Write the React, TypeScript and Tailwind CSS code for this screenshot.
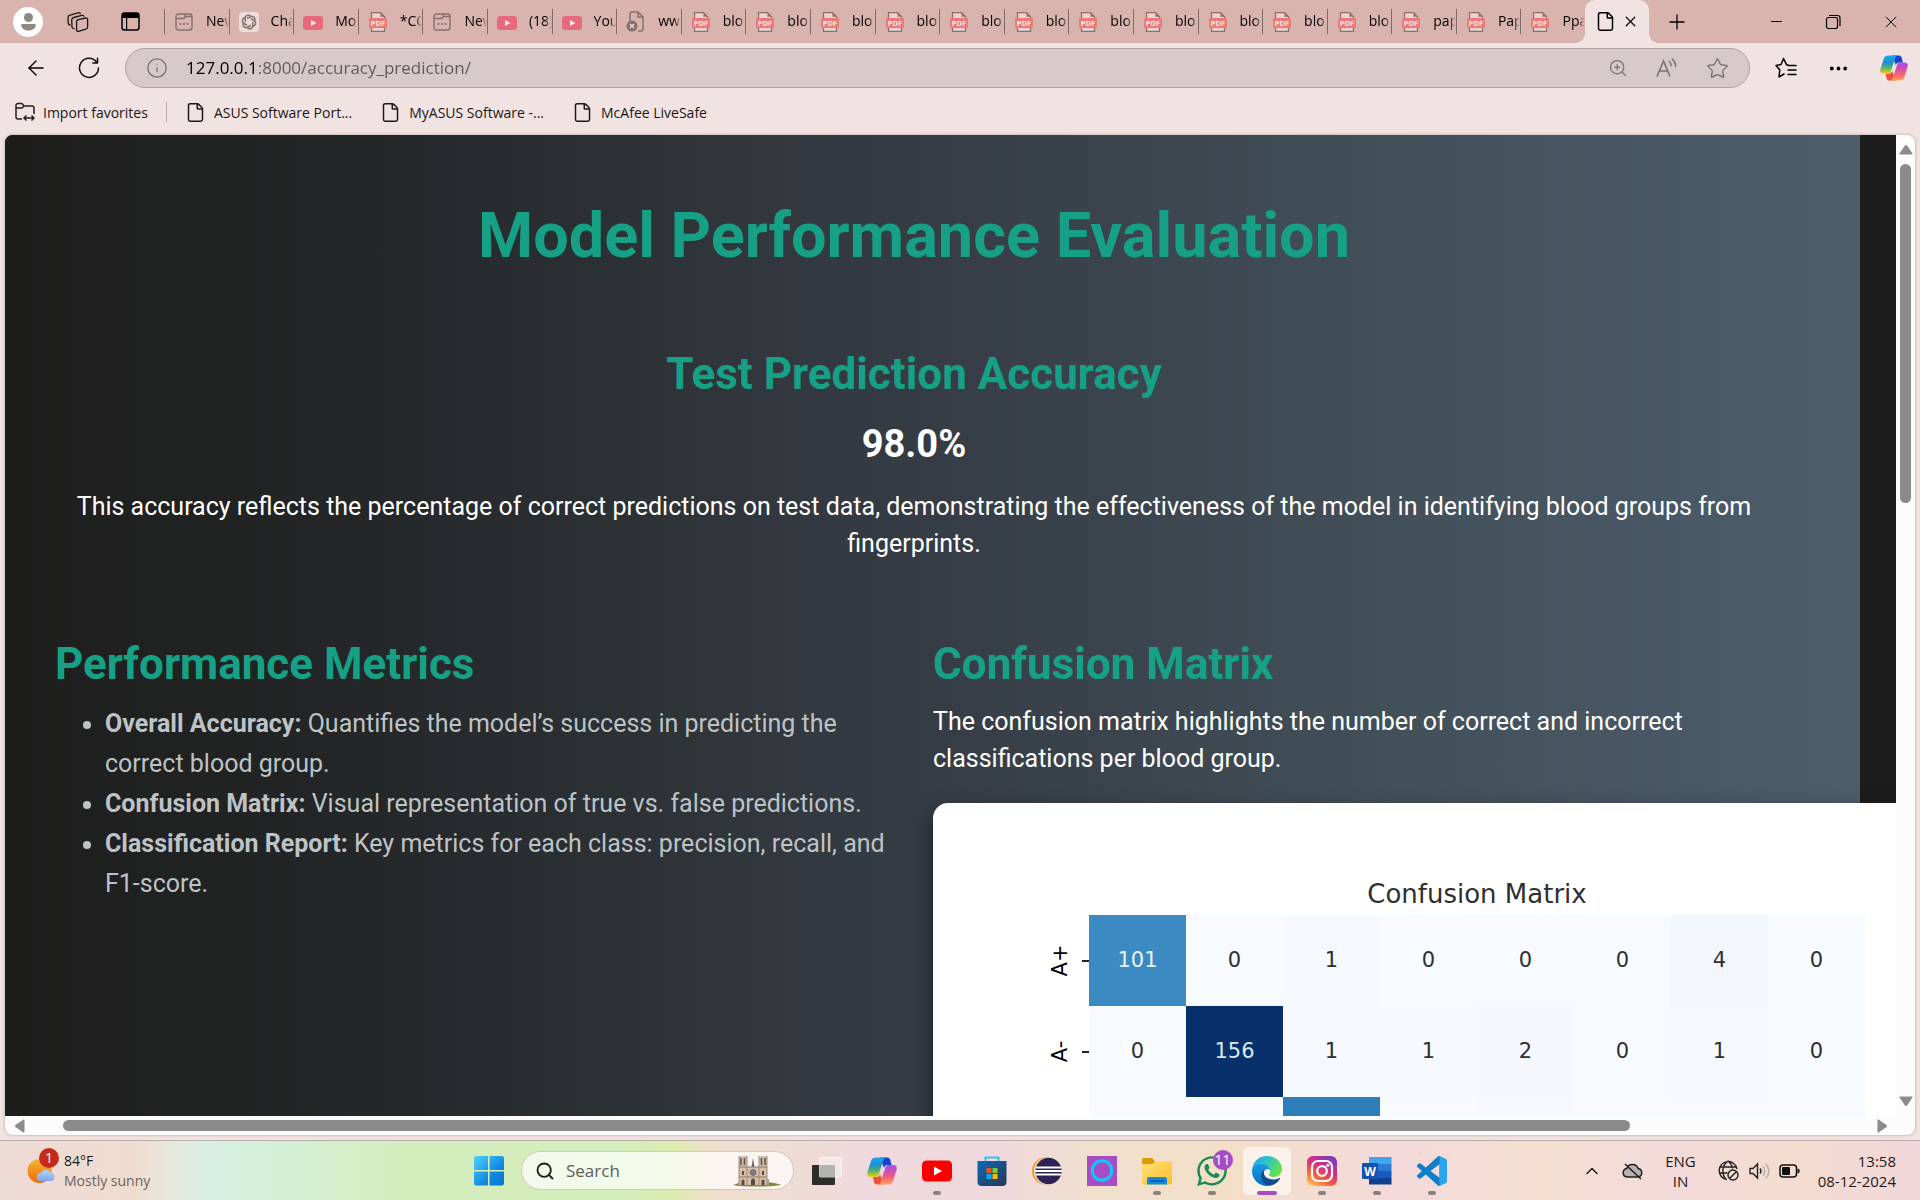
import React from "react";
import { File, Plus, X, Minus, ArrowLeft, Info, ZoomIn, Star, Ellipsis, ChevronUp, Search } from "lucide-react";
import { RiOpenaiLine } from "react-icons/ri";
import { FaWhatsapp } from "react-icons/fa";

const PdfIcon = () => (
  <svg width="18" height="20" viewBox="0 0 18 20">
    <path d="M2.500 .7h9l4 4v14.600h-13z" fill="#ead3d0" stroke="#8d6f6c" strokeWidth="1.300" />
    <path d="M11.500 .7v4h4z" fill="#8d6f6c" />
    <rect x="0" y="6" width="18" height="10" rx="1" fill="#ea7b7a" />
    <text x="9" y="13.800" fontSize="7.500" fontWeight="700" fontFamily="Open Sans" textAnchor="middle" fill="#fbe6e4">PDF</text>
  </svg>
);
const YoutubeIcon = () => (
  <svg width="20" height="20" viewBox="0 0 20 20">
    <rect x="0" y="4" width="20" height="14" rx="3.500" fill="#e8697a" />
    <path d="M8 8l5.500 3L8 14z" fill="#fde8ea" />
  </svg>
);
const NewTabIcon = () => (
  <svg width="18" height="18" viewBox="0 0 18 18" fill="none" stroke="#86706d" strokeWidth="1.400">
    <rect x="1" y="1" width="16" height="16" rx="2.500" />
    <path d="M1 5.500h7a2 2 0 0 0 2-2V1M10 3.500h7" />
    <path d="M4.500 11h1.800M8.100 11h1.800M11.700 11h1.800" strokeWidth="1.800" />
  </svg>
);
const GptIcon = () => (
  <span className="flex size-5 items-center justify-center rounded-sm bg-[#ecdcda] text-[#86706d]">
    <RiOpenaiLine size={18} />
  </span>
);
const ErrorPageIcon = () => (
  <svg width="20" height="22" viewBox="0 0 20 22" fill="none" stroke="#86706d" strokeWidth="1.500">
    <path d="M4 10V3a2 2 0 0 1 2-2h6l5 5v12a2 2 0 0 1-2 2h-3M12 1v5h5" />
    <circle cx="6" cy="15" r="5.500" fill="#86706d" stroke="none" />
    <path d="M4 13l4 4M8 13l-4 4" stroke="#ecd6d2" />
  </svg>
);

const pdf = <PdfIcon />;
const yt = <YoutubeIcon />;
const tabs: { icon: React.ReactNode; label: string }[] = [
  { icon: <NewTabIcon />, label: "New" },
  { icon: <GptIcon />, label: "Cha" },
  { icon: yt, label: "Mo" },
  { icon: pdf, label: "*CC" },
  { icon: <NewTabIcon />, label: "New" },
  { icon: yt, label: "(18)" },
  { icon: yt, label: "You" },
  { icon: <ErrorPageIcon />, label: "ww" },
  ...Array.from({ length: 11 }, () => ({ icon: pdf, label: "blo" })),
  { icon: pdf, label: "pap" },
  { icon: pdf, label: "Pap" },
  { icon: pdf, label: "Ppa" },
];

const Copilot = ({ size }: { size: number }) => (
  <svg width={size} height={size} viewBox="0 0 30 30">
    <defs>
      <linearGradient id="cpA" x1="0" y1="0" x2="0" y2="1">
        <stop offset="0" stopColor="#16a7f0" /><stop offset=".4" stopColor="#1c8fd0" />
        <stop offset=".7" stopColor="#5cb562" /><stop offset="1" stopColor="#f5d20c" />
      </linearGradient>
      <linearGradient id="cpB" x1="0" y1="0" x2="0" y2="1">
        <stop offset="0" stopColor="#a24df0" /><stop offset=".45" stopColor="#e0529c" />
        <stop offset=".75" stopColor="#fb6f68" /><stop offset="1" stopColor="#ffab53" />
      </linearGradient>
    </defs>
    <path d="M13 1.500h7.500c1.500 0 2.300 1 2.800 2.500L24.500 9h-4c-2 0-3 1-3.500 3z" fill="#1544c8" />
    <path d="M17 28.500H9.500c-1.500 0-2-1-2.500-2.500L6 21h3.500c2 0 3-1 3.500-3z" fill="#f0503c" />
    <path d="M9 1.500h10c-1.500 0-2.200 1.200-2.800 3l-4.200 13c-.7 2.200-1.500 3.500-3.500 3.500H4c-3 0-4.500-1.500-3.500-5L4 5c.8-2.500 2.500-3.500 5-3.500z" fill="url(#cpA)" />
    <path d="M21 28.500H11c1.500 0 2.200-1.200 2.800-3l4.200-13C18.700 10.300 19.500 9 21.500 9H26c3 0 4.500 1.500 3.500 5L26 25c-.8 2.500-2.500 3.500-5 3.500z" fill="url(#cpB)" />
  </svg>
);

const StartIcon = () => (
  <svg width="30" height="30" viewBox="0 0 30 30">
    <defs><linearGradient id="win" x1="0" y1="0" x2="1" y2="1"><stop stopColor="#4fd2fd" /><stop offset=".6" stopColor="#118ae0" /><stop offset="1" stopColor="#0573cf" /></linearGradient></defs>
    <path d="M1.500 0H14v14H0V1.500zM15.500 0H28.500L30 1.500V14H15.500zM0 15.500h14V29.500H1.500L0 28zM15.500 15.500H30V28l-1.500 1.500h-13z" fill="url(#win)" />
  </svg>
);
const TaskViewIcon = () => (
  <svg width="30" height="30" viewBox="0 0 30 30">
    <rect x="0" y="9" width="23" height="20" rx="1" fill="#2c2c2b" />
    <rect x="7.500" y="1.500" width="22" height="19.500" rx="1" fill="#f3efee" fillOpacity=".75" stroke="#fff" strokeOpacity=".7" />
    <rect x="7.500" y="9" width="15.500" height="12" fill="#b5b3b2" />
  </svg>
);
const YoutubeApp = () => (
  <svg width="30" height="30" viewBox="0 0 30 30"><rect y="4.500" width="30" height="21" rx="4.500" fill="#fe0000" /><path d="M12 10.500l8 4.500-8 4.500z" fill="#fff" /></svg>
);
const StoreIcon = () => (
  <svg width="30" height="30" viewBox="0 0 30 30">
    <defs><linearGradient id="store" x1="0" y1="0" x2="1" y2="1"><stop stopColor="#0d6ab8" /><stop offset="1" stopColor="#283653" /></linearGradient></defs>
    <path d="M8.500 6V1.500h13V6" fill="none" stroke="#2bc3f0" strokeWidth="2" />
    <path d="M.5 5h29v21a4 4 0 0 1-4 4h-21a4 4 0 0 1-4-4z" fill="url(#store)" />
    <rect x="9.500" y="12" width="5" height="5" fill="#f1511b" /><rect x="15.500" y="12" width="5" height="5" fill="#80cc28" />
    <rect x="9.500" y="18" width="5" height="5" fill="#00adef" /><rect x="15.500" y="18" width="5" height="5" fill="#fbbc09" />
  </svg>
);
const EclipseIcon = () => (
  <svg width="30" height="30" viewBox="0 0 30 30">
    <circle cx="13.500" cy="15" r="13.500" fill="#f7941e" /><circle cx="15.200" cy="15" r="13.300" fill="#f6e6dc" />
    <circle cx="16.500" cy="15" r="13.200" fill="#2c2255" />
    <path d="M3.500 11.500h26M3 15h27M3.500 18.500h26" stroke="#fff" strokeWidth="1.800" />
  </svg>
);
const AlexaIcon = () => (
  <svg width="30" height="30" viewBox="0 0 30 30">
    <rect width="30" height="30" fill="#a74cc2" />
    <circle cx="15" cy="14.500" r="9.700" fill="none" stroke="#12c8fb" strokeWidth="3" />
    <path d="M13.500 22.500h6c-1 1.500-3.500 3-6 3.500z" fill="#12c8fb" />
  </svg>
);
const FolderIcon = () => (
  <svg width="30" height="30" viewBox="0 0 30 30">
    <defs><linearGradient id="fold" x1="0" y1="0" x2="1" y2="1"><stop stopColor="#ffe07c" /><stop offset="1" stopColor="#fcbf25" /></linearGradient></defs>
    <path d="M0 3.500a1.500 1.500 0 0 1 1.500-1.500H10l3 3.500V9H0z" fill="#dd9c05" />
    <path d="M0 8h10.500l3-2.500H30V27.500a1 1 0 0 1-1 1H1a1 1 0 0 1-1-1z" fill="url(#fold)" />
    <path d="M5 28.500V23a2 2 0 0 1 2-2h16a2 2 0 0 1 2 2v5.500z" fill="#1288e0" />
    <path d="M8 25h14" stroke="#0a58a8" strokeWidth="1.500" />
  </svg>
);
const EdgeIcon = () => (
  <svg width="30" height="30" viewBox="0 0 30 30">
    <defs>
      <linearGradient id="edT" x1="0" y1="0" x2="1" y2=".5"><stop stopColor="#1d9fe0" /><stop offset=".5" stopColor="#2dc4c8" /><stop offset="1" stopColor="#66e24a" /></linearGradient>
      <linearGradient id="edL" x1="0" y1="0" x2="0" y2="1"><stop stopColor="#1b9de2" /><stop offset="1" stopColor="#0a6cc8" /></linearGradient>
    </defs>
    <path d="M0 15C0 6 7 0 15 0c9 0 15 6.500 15 13 0 5-4 8-8 8-3.500 0-5-1.200-5-2.400 0-.9 1.200-1.300 1.200-3.600C18.200 11 14 7.500 9 7.500 4 7.500 0 11 0 15z" fill="url(#edT)" />
    <path d="M0 15c0-4.500 4-7.500 9-7.500 5 0 9 3.200 9.200 7C17 11.800 11.500 12 11 19c-.4 5.500 4 9.500 8 10.300C10 32 0 25.500 0 15z" fill="url(#edL)" />
    <path d="M12.800 13.500c-2 1-3.800 3.500-3.800 6.500 0 5.500 5 9.800 9.500 9.500 4-.6 7.500-3.500 9.300-6.500.5-.8 0-1.200-.8-.8-6 3-14 .5-15-4.200-.3-1.600 0-3.200.8-4.500z" fill="#0d4c94" />
  </svg>
);
const InstagramIcon = () => (
  <svg width="30" height="30" viewBox="0 0 30 30">
    <defs>
      <linearGradient id="ig" x1=".2" y1="1" x2=".8" y2="0"><stop stopColor="#fec053" /><stop offset=".3" stopColor="#f5603a" /><stop offset=".6" stopColor="#d62d80" /><stop offset="1" stopColor="#7a3bc4" /></linearGradient>
    </defs>
    <rect width="30" height="30" rx="6" fill="url(#ig)" />
    <g fill="none" stroke="#fff" strokeWidth="2.200"><rect x="5" y="5" width="20" height="20" rx="6" /><circle cx="15" cy="15" r="4.800" /></g>
    <circle cx="20.800" cy="9.200" r="1.500" fill="#fff" />
  </svg>
);
const WordIcon = () => (
  <svg width="30" height="30" viewBox="0 0 30 30">
    <rect x="7" y="1" width="22.500" height="7.500" fill="#41a5ee" /><rect x="7" y="8" width="22.500" height="7" fill="#2b7cd3" />
    <rect x="7" y="15" width="22.500" height="7" fill="#185abd" /><rect x="7" y="22" width="22.500" height="6.500" fill="#103f91" />
    <rect x="0" y="7" width="16" height="16" rx="1" fill="#1852b0" />
    <text x="8" y="19.500" fontSize="12" fontWeight="700" fontFamily="Open Sans" textAnchor="middle" fill="#fff">W</text>
  </svg>
);
const VsCodeIcon = () => (
  <svg width="30" height="30" viewBox="0 0 24 24">
    <path d="M23.150 2.587L18.210.21a1.494 1.494 0 0 0-1.705.29l-9.460 8.630-4.120-3.128a.999.999 0 0 0-1.276.057L.327 7.261A1 1 0 0 0 .326 8.740L3.899 12 .326 15.260a1 1 0 0 0 .001 1.479L1.650 17.940a.999.999 0 0 0 1.276.057l4.120-3.128 9.460 8.630a1.492 1.492 0 0 0 1.704.290l4.942-2.377A1.500 1.500 0 0 0 24 20.060V3.939a1.500 1.500 0 0 0-.85-1.352zm-5.146 14.861L10.826 12l7.178-5.448v10.896z" fill="#0f7fc9" />
    <path d="M18 .1l5.150 2.487a1.500 1.500 0 0 1 .85 1.352V20.060a1.500 1.500 0 0 1-.85 1.352L18 23.900z" fill="#2da4f2" />
  </svg>
);
const CathedralIcon = () => (
  <svg width="48" height="32" viewBox="0 0 48 32">
    <path d="M0 30c6-2.500 10-3 24-3s18 1 24 3c-8 2-40 2-48 0z" fill="#7c8a3c" />
    <path d="M6 1h8v11h12V1h8v29H6z" fill="#d6bfa9" />
    <path d="M20 3l1.500 9h-3z" fill="#6b6460" />
    <path d="M8 3v7M11.500 3v7M28.500 3v7M32 3v7" stroke="#5e5651" strokeWidth="1.600" />
    <path d="M6 12h28M6 22h28" stroke="#8d7866" strokeWidth="1.200" />
    <path d="M6 1v29M14 1v29M26 1v29M34 1v29" stroke="#a38a76" />
    <circle cx="20" cy="17.500" r="2.800" fill="#75819c" stroke="#6f5c4e" />
    <path d="M8.500 30v-4a1.500 1.500 0 0 1 3 0v4zM18 30v-4.500a2 2 0 0 1 4 0V30zM28.500 30v-4a1.500 1.500 0 0 1 3 0v4zM9 20v-4h2v4zM29 20v-4h2v4z" fill="#5d4a40" />
    <path d="M34 24h2v6h-2z" fill="#b49b83" />
  </svg>
);
const WeatherIcon = () => (
  <svg width="28" height="30" viewBox="0 0 28 30">
    <defs>
      <linearGradient id="sun" x1="0" y1="0" x2="0" y2="1"><stop stopColor="#f2b72c" /><stop offset="1" stopColor="#f06a12" /></linearGradient>
      <linearGradient id="cld" x1="0" y1="0" x2="0" y2="1"><stop stopColor="#b7d4fa" /><stop offset="1" stopColor="#7fa6ef" /></linearGradient>
    </defs>
    <circle cx="12.500" cy="15" r="12" fill="url(#sun)" />
    <path d="M14 25a4 4 0 0 1-.5-8 6 6 0 0 1 10.500-.5 4.300 4.300 0 0 1-.5 8.500z" fill="url(#cld)" />
  </svg>
);

const apps: { name: string; icon: React.ReactNode; state?: "open" | "active"; badge?: string }[] = [
  { name: "Task view", icon: <TaskViewIcon /> },
  { name: "Copilot", icon: <Copilot size={30} /> },
  { name: "YouTube", icon: <YoutubeApp />, state: "open" },
  { name: "Store", icon: <StoreIcon /> },
  { name: "Eclipse", icon: <EclipseIcon /> },
  { name: "Alexa", icon: <AlexaIcon /> },
  { name: "Files", icon: <FolderIcon />, state: "open" },
  { name: "WhatsApp", icon: <FaWhatsapp size={34} color="#1d8a56" />, state: "open", badge: "11" },
  { name: "Edge", icon: <EdgeIcon />, state: "active" },
  { name: "Instagram", icon: <InstagramIcon />, state: "open" },
  { name: "Word", icon: <WordIcon />, state: "open" },
  { name: "Code", icon: <VsCodeIcon />, state: "open" },
];

function TabStrip() {
  return (
    <header className="flex h-[43px] shrink-0 items-stretch bg-[#d9b3ad]">
      <div className="flex w-[164px] shrink-0 items-center pl-[13px]">
        <button aria-label="Profile" className="flex size-[30px] items-center justify-center rounded-full bg-white">
          <svg width="15" height="18" viewBox="0 0 15 18" fill="#8b8886"><circle cx="7.500" cy="4.500" r="4.500" /><path d="M1.500 11h12a1.300 1.300 0 0 1 1.300 1.400C14.500 15.500 11 17.500 7.500 17.500S.5 15.500.2 12.400A1.300 1.300 0 0 1 1.500 11z" /></svg>
        </button>
        <button aria-label="Workspaces" className="ml-6">
          <svg width="22" height="22" viewBox="0 0 22 22" fill="none" stroke="#1b1716" strokeWidth="1.300">
            <path d="M10.500 8.800l8-1.800a1.700 1.700 0 0 1 2.100 1.700v7a2.500 2.500 0 0 1-1.800 2.400l-7.200 2.200a1.500 1.500 0 0 1-2-1.300v-8a2.300 2.300 0 0 1 .9-2.200z" />
            <path d="M7.500 17.500c-1.300.3-2.300-.3-2.500-1.500L4.700 9a2.600 2.600 0 0 1 2-2.500l8-2.100c1.300-.3 2.200.2 2.600 1.200" />
            <path d="M3.500 14C2 14 1.300 13.300 1.200 12L1 6.700A2.600 2.600 0 0 1 3 4.100l8-2.300c1.300-.3 2.200.2 2.600 1.200" />
          </svg>
        </button>
        <button aria-label="Tab actions" className="ml-8">
          <svg width="19" height="19" viewBox="0 0 19 19"><rect x="1" y="1" width="17" height="17" rx="2.500" fill="none" stroke="#000" strokeWidth="1.500" /><path d="M1 6V3.500A2.500 2.500 0 0 1 3.500 1h12A2.500 2.500 0 0 1 18 3.500V6zM5 6h1.200v12H5z" /></svg>
        </button>
      </div>
      <nav className="flex min-w-0 flex-1 items-center">
        {tabs.map((t, i) => (
          <button key={i} className="flex h-[25px] min-w-0 flex-1 items-center border-l border-[#806a67] pl-[9px]">
            <span className="flex w-5 shrink-0 justify-center">{t.icon}</span>
            <span className="ml-3 min-w-0 flex-1 overflow-hidden pb-0.5 text-left text-[14px] leading-5 whitespace-nowrap [mask-image:linear-gradient(to_right,black_70%,transparent)]">{t.label}</span>
          </button>
        ))}
      </nav>
      <div className="relative flex w-16 shrink-0 items-center justify-between rounded-t-[10px] bg-[#f1e3e1] px-[10px]">
        <span className="absolute bottom-0 -left-[10px] size-[10px] bg-[radial-gradient(circle_at_0_0,#d9b3ad_10px,#f1e3e1_10px)]" />
        <span className="absolute -right-[10px] bottom-0 size-[10px] bg-[radial-gradient(circle_at_100%_0,#d9b3ad_10px,#f1e3e1_10px)]" />
        <File size={21} strokeWidth={1.7} />
        <button aria-label="Close tab"><X size={17} strokeWidth={1.7} /></button>
      </div>
      <div className="flex w-[271px] shrink-0 items-center justify-between pr-[19px] pl-[16px]">
        <button aria-label="New tab"><Plus size={24} strokeWidth={1.3} /></button>
        <div className="flex items-center gap-10">
          <button aria-label="Minimize"><Minus size={17} strokeWidth={1.4} /></button>
          <button aria-label="Restore">
            <svg width="16" height="16" viewBox="0 0 16 16" fill="none" stroke="#000" strokeWidth="1.200"><rect x="1.500" y="3.500" width="11" height="11" rx="2" /><path d="M4 1.500h8.500A2.500 2.500 0 0 1 15 4v8" /></svg>
          </button>
          <button aria-label="Close"><X size={20} strokeWidth={1.2} /></button>
        </div>
      </div>
    </header>
  );
}

function Toolbar() {
  return (
    <div className="flex h-[50px] shrink-0 items-center pr-3 pl-6">
      <button aria-label="Back" className="w-[54px]"><ArrowLeft size={24} strokeWidth={1.4} /></button>
      <button aria-label="Refresh" className="w-[47px]">
        <svg width="22" height="22" viewBox="0 0 22 22" fill="none" stroke="#111" strokeWidth="1.500" strokeLinecap="round" strokeLinejoin="round"><path d="M20.500 11A9.500 9.500 0 1 1 18.500 5M19.500 1.200V6H14.800" /></svg>
      </button>
      <div className="flex h-10 flex-1 items-center rounded-full border border-[#ada09f] bg-[#d6c9c8] px-5 text-[#77706f]">
        <Info size={22} strokeWidth={1.4} />
        <input
          aria-label="Address"
          defaultValue="127.0.0.1:8000/accuracy_prediction/"
          className="ml-[18px] min-w-0 flex-1 bg-[linear-gradient(to_right,#000_70px,#5f5958_70px)] bg-clip-text text-[17px] text-transparent outline-none"
        />
        <div className="flex items-center gap-7">
          <ZoomIn size={20} strokeWidth={1.5} />
          <svg width="22" height="20" viewBox="0 0 22 20" fill="none" stroke="currentColor" strokeWidth="1.500"><path d="M1 18.500L7.500 3 14 18.500M3.300 13h8.400M13 3c1.500 1.200 2.200 3 2.200 5.200M16 .8c2.500 2 3.700 4.800 3.700 8.200" /></svg>
          <Star size={23} strokeWidth={1.4} />
        </div>
      </div>
      <div className="flex items-center gap-[30px] pl-[25px]">
        <button aria-label="Favorites">
          <svg width="22" height="22" viewBox="0 0 22 22" fill="none" stroke="#000" strokeWidth="1.500"><path d="M13 8l-1.500-.3L8.500 1.500 6 7.500l-5 1 3.800 4.500L4 20l5-3M13 8.500h8M13 13h8M13 17.500h8" strokeLinejoin="round" strokeLinecap="round" /></svg>
        </button>
        <button aria-label="More"><Ellipsis size={23} strokeWidth={2} /></button>
        <button aria-label="Copilot"><Copilot size={28} /></button>
      </div>
    </div>
  );
}

function FavoritesBar() {
  return (
    <div className="flex h-[42px] shrink-0 items-center pb-1 pl-[15px] text-[14px] text-[#1c1817]">
      <button className="flex items-center gap-2">
        <svg width="20" height="20" viewBox="0 0 20 20" fill="none" stroke="#222" strokeWidth="1.500"><path d="M7 17H3a2 2 0 0 1-2-2V3.500a2 2 0 0 1 2-2h4l2 2.500h8a2 2 0 0 1 2 2v6M1 6h6l2-2M9.500 16h9M11.500 13.500L9 16l2.500 2.500M16.500 13.500L19 16l-2.500 2.500" /></svg>
        Import favorites
      </button>
      <span className="mx-[18px] h-5 w-px bg-[#b9adab]" />
      <div className="flex gap-7">
        {["ASUS Software Port...", "MyASUS Software -...", "McAfee LiveSafe"].map((t) => (
          <a key={t} href="#" className="flex items-center gap-2"><File size={21} strokeWidth={1.7} />{t}</a>
        ))}
      </div>
    </div>
  );
}

const cellColor: Record<number, string> = { 0: "bg-[#f7fbff]", 1: "bg-[#f5f9fe]", 2: "bg-[#f4f8fd]", 4: "bg-[#f2f7fe]", 101: "bg-[#3b8bc2] text-[#e8f1f8]", 156: "bg-[#08306b] text-[#dfe6ee]" };
const rows: { name: string; values: number[] }[] = [
  { name: "A+", values: [101, 0, 1, 0, 0, 0, 4, 0] },
  { name: "A-", values: [0, 156, 1, 1, 2, 0, 1, 0] },
];
const nextRow = ["bg-[#f7fbff]", "bg-[#f7fbff]", "bg-[#2e7ebc]", "bg-[#f7fbff]", "bg-[#f5f9fe]", "bg-[#f7fbff]", "bg-[#f7fbff]", "bg-[#f7fbff]"];

function Matrix() {
  return (
    <div className="mt-[26px] h-[700px] w-[1100px] rounded-[15px] bg-white pt-[70px] pl-[111px] shadow-[0_8px_20px_rgba(0,0,0,0.5)]">
      <table className="table-fixed border-collapse font-['DejaVu_Sans',sans-serif] text-[#2f2f2f]">
        <thead>
          <tr>
            <td className="w-[45px]" />
            <th colSpan={8} scope="colgroup" className="h-[42px] text-[26px] leading-10 font-normal">Confusion Matrix</th>
          </tr>
        </thead>
        <tbody className="text-[21px]">
          {rows.map((r) => (
            <tr key={r.name} className="h-[91px]">
              <th scope="row" className="p-0 font-normal text-black">
                <div className="flex items-center justify-between">
                  <span className="w-8 -rotate-90 text-center">{r.name}</span>
                  <span className="h-[2px] w-[7px] bg-[#222]" />
                </div>
              </th>
              {r.values.map((v, i) => (
                <td key={i} className={"w-[97px] p-0 text-center " + cellColor[v]}>{v}</td>
              ))}
            </tr>
          ))}
          <tr className="h-[91px]">
            <td />
            {nextRow.map((c, i) => <td key={i} className={c} />)}
          </tr>
        </tbody>
      </table>
    </div>
  );
}

const heading = "text-[44px] leading-[52px] font-bold text-[#16a085]";

function Report() {
  return (
    <main className="min-w-0 flex-1 overflow-hidden bg-[#1c1c1c]">
      <div className="mr-9 min-h-full bg-[linear-gradient(to_right,#1d1e1c,#232526_17%,#2b3033_32%,#32383e_42%,#363c45_50%,#42505a_75%,#4d5d6b)] pt-[63px] pr-[87px] pl-[50px] font-[Roboto,sans-serif] text-[25px] leading-[37px] text-white">
        <h1 className="text-center text-[63px] leading-[76px] font-bold text-[#16a085]">Model Performance Evaluation</h1>
        <section className="mt-[74px] px-5 text-center">
          <h2 className={heading}>Test Prediction Accuracy</h2>
          <p className="mt-5 text-[38px] leading-[48px] font-bold">98.0%</p>
          <p className="mt-5">This accuracy reflects the percentage of correct predictions on test data, demonstrating the effectiveness of the model in identifying blood groups from fingerprints.</p>
        </section>
        <div className="mt-[76px] grid grid-cols-2 gap-[38px]">
          <section>
            <h2 className={heading}>Performance Metrics</h2>
            <ul className="mt-[14px] list-disc pl-[50px] leading-10 text-[#bdc3c7]">
              <li><strong>Overall Accuracy:</strong> Quantifies the model’s success in predicting the correct blood group.</li>
              <li><strong>Confusion Matrix:</strong> Visual representation of true vs. false predictions.</li>
              <li><strong>Classification Report:</strong> Key metrics for each class: precision, recall, and F1-score.</li>
            </ul>
          </section>
          <section className="min-w-0">
            <h2 className={heading}>Confusion Matrix</h2>
            <p className="mt-[13px]">The confusion matrix highlights the number of correct and incorrect classifications per blood group.</p>
            <Matrix />
          </section>
        </div>
      </div>
    </main>
  );
}

const Arrow = ({ className = "" }: { className?: string }) => (
  <svg width="14" height="10" viewBox="0 0 14 10" className={className}><path d="M1 9.500a.6.600 0 0 1-.5-1L5.800.8a1.500 1.500 0 0 1 2.400 0l5.300 7.700a.6.600 0 0 1-.5 1z" fill="#8b8b8b" /></svg>
);

function Taskbar() {
  return (
    <footer className="grid h-[60px] shrink-0 grid-cols-[1fr_auto_1fr] items-center border-t border-[#b8aead] bg-[linear-gradient(to_right,#efdbd6,#f0dccf_7%,#e6e9dd_9%,#d8efe4_11%,#d3f0d8_14%,#d5edbd_21%,#d4edba_33%,#dcecad_35%,#efdfcc_37%,#f0d9dc_45%,#f0d9dc_52%,#f1dfce_57%,#f3dfc8_64%,#f3dadb_73%,#f4dfd0_80%,#f3dadb_87%,#f4dccf_93%,#f2d6da)] text-[15px] leading-5 text-[#1d1b1a]">
      <button className="flex items-center pl-[27px] text-left">
        <span className="relative">
          <WeatherIcon />
          <span className="absolute -top-2 left-3 flex size-5 items-center justify-center rounded-full bg-[#c42b1c] text-[14px] text-white">1</span>
        </span>
        <span className="ml-[9px] text-[14px]">84°F<br /><span className="text-[#6a6461]">Mostly sunny</span></span>
      </button>
      <div className="flex items-center">
        <button aria-label="Start" className="flex w-[55px] justify-center"><StartIcon /></button>
        <label className="mx-[5px] flex h-[39px] w-[273px] items-center rounded-full border border-[#cfc9b8] bg-white/70 pr-3 pl-[13px]">
          <Search size={20} strokeWidth={2.2} />
          <input aria-label="Search" placeholder="Search" className="ml-[11px] min-w-0 flex-1 text-[17px] outline-none placeholder:text-[#5f5c5a]" />
          <CathedralIcon />
        </label>
        {apps.map((a) => (
          <button key={a.name} aria-label={a.name} className="flex w-[55px] justify-center">
            <span className={a.state === "active" ? "relative flex size-12 items-center justify-center rounded-md bg-white/60" : "relative flex size-12 items-center justify-center"}>
              {a.icon}
              {a.badge && <span className="absolute top-[3px] right-[3px] flex size-5 items-center justify-center rounded-full bg-[#a74cc2] text-[14px] text-white">{a.badge}</span>}
              {a.state === "open" && <span className="absolute bottom-0 h-1 w-2 rounded-full bg-[#8a7f7b]" />}
              {a.state === "active" && <span className="absolute bottom-0 h-1 w-5 rounded-full bg-[#a74cc2]" />}
            </span>
          </button>
        ))}
      </div>
      <div className="flex items-center justify-end pr-6">
        <ChevronUp size={20} strokeWidth={1.8} />
        <svg width="21" height="18" viewBox="0 0 21 18" className="ml-5"><path d="M5 15a4.300 4.300 0 0 1-.3-8.500 6.200 6.200 0 0 1 11.500 0A4.300 4.300 0 0 1 16 15z" fill="#b5b2b1" stroke="#222" strokeWidth="1.500" /><path d="M3 2l16 15" stroke="#222" strokeWidth="1.600" /></svg>
        <span className="ml-[22px] text-center">ENG<br />IN</span>
        <svg width="21" height="21" viewBox="0 0 21 21" fill="none" stroke="#222" strokeWidth="1.400" className="ml-[22px]"><path d="M9 19.500A9 9 0 1 1 19 9M10 1C3.500 6 3.500 14 8 19.500M10 1c3 2.500 4.200 5 4.300 7.500M1.500 7h17M1.500 13h8" /><circle cx="15" cy="15" r="5" /><path d="M11.500 18.500l7-7" /></svg>
        <svg width="21" height="18" viewBox="0 0 21 18" fill="none" stroke="#222" strokeWidth="1.400" className="ml-[10px]"><path d="M1 6.500h3L8.500 2v14L4 11.500H1zM11 6.500a4 4 0 0 1 0 5" /><path d="M14 4.500a7 7 0 0 1 0 9M17 2a10 10 0 0 1 0 14" stroke="#b7a8a7" /></svg>
        <svg width="21" height="14" viewBox="0 0 21 14" className="ml-[9px]"><rect x="1" y="1" width="16.500" height="12" rx="3" fill="none" stroke="#111" strokeWidth="1.500" /><rect x="3" y="3" width="8" height="8" rx="1" fill="#111" /><path d="M18.500 4.500l2 1v3l-2 1z" fill="#111" /></svg>
        <span className="ml-[18px] text-right">13:58<br />08-12-2024</span>
      </div>
    </footer>
  );
}

export default function App() {
  return (
    <div className="flex h-screen flex-col overflow-hidden bg-[#f1e3e1] font-['Open_Sans','Noto_Sans',sans-serif] text-black">
      <TabStrip />
      <Toolbar />
      <FavoritesBar />
      <div className="mx-[5px] mb-[5px] flex min-h-0 flex-1 flex-col overflow-hidden rounded-lg bg-[#fcfcfc] shadow-[0_0_3px_rgba(120,80,80,0.5)]">
        <div className="flex min-h-0 flex-1">
          <Report />
          <div className="flex w-[19px] shrink-0 flex-col items-center py-[10px]">
            <Arrow />
            <div className="mt-[9px] h-[339px] w-[11px] rounded-full bg-[#8b8b8b]" />
            <Arrow className="mt-auto rotate-180" />
          </div>
        </div>
        <div className="flex h-[19px] shrink-0 items-center pr-[26px] pl-2">
          <Arrow className="-rotate-90" />
          <div className="mr-[245px] ml-9 h-[11px] flex-1 rounded-full bg-[#8b8b8b]" />
          <Arrow className="rotate-90" />
        </div>
      </div>
      <Taskbar />
    </div>
  );
}
